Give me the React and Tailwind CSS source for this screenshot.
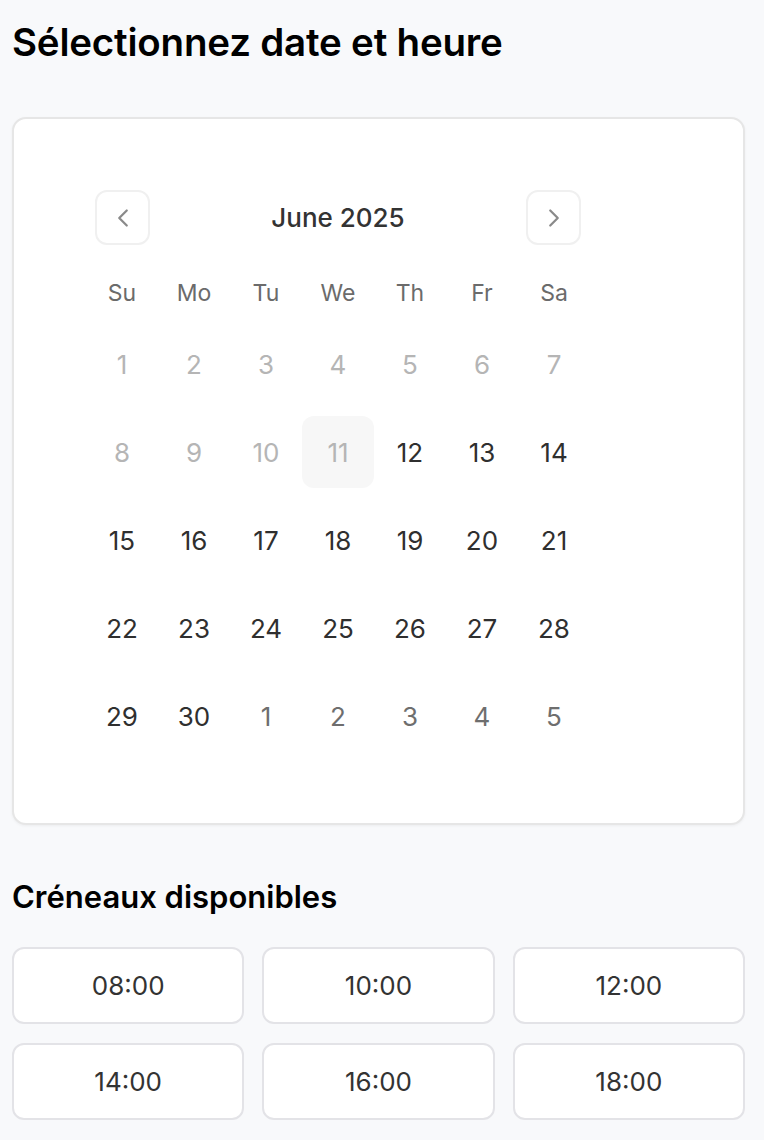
import React from "react";
import { ChevronLeft, ChevronRight } from "lucide-react";

const weekdays = ["Su", "Mo", "Tu", "We", "Th", "Fr", "Sa"];
const rows = [
  [1, 2, 3, 4, 5, 6, 7].map((d) => ({ d, t: "dis" })),
  [8, 9, 10].map((d) => ({ d, t: "dis" })).concat([{ d: 11, t: "today" }, { d: 12, t: "n" }, { d: 13, t: "n" }, { d: 14, t: "n" }]),
  [15, 16, 17, 18, 19, 20, 21].map((d) => ({ d, t: "n" })),
  [22, 23, 24, 25, 26, 27, 28].map((d) => ({ d, t: "n" })),
  [{ d: 29, t: "n" }, { d: 30, t: "n" }].concat([1, 2, 3, 4, 5].map((d) => ({ d, t: "out" }))),
];

const slots = ["08:00", "10:00", "12:00", "14:00", "16:00", "18:00"];

export default function App() {
  return (
    <div className="min-h-[1140px] bg-[#f8f9fb] pl-3 pr-[19px] pt-[18px]" style={{ fontFamily: "Inter, 'Noto Sans', sans-serif" }}>
      <h1 className="text-[38.5px] font-semibold leading-[48px] tracking-[-0.2px] text-black">Sélectionnez date et heure</h1>
      <div className="mt-[51px] h-[708px] rounded-[14px] border-2 border-[#e6e6e6] bg-white pl-[72px] pt-[71px] shadow-[0_1px_3px_rgba(0,0,0,0.05)]">
        <div className="w-[504px]">
          <div className="flex h-[55px] items-center justify-between px-[9px]">
            <button className="flex h-[55px] w-[55px] items-center justify-center rounded-[12px] border-2 border-[#f0f0f0] bg-white text-[#8a8a8a]">
              <ChevronLeft size={30} strokeWidth={1.8} />
            </button>
            <div className="text-[26px] font-medium text-[#333]">June 2025</div>
            <button className="flex h-[55px] w-[55px] items-center justify-center rounded-[12px] border-2 border-[#f0f0f0] bg-white text-[#8a8a8a]">
              <ChevronRight size={30} strokeWidth={1.8} />
            </button>
          </div>
          <div className="mt-[33px] grid grid-cols-7">
            {weekdays.map((w) => (
              <div key={w} className="flex h-[30px] items-center justify-center text-[23px] text-[#6b6b6b]">{w}</div>
            ))}
          </div>
          <div className="mt-[20px] flex flex-col gap-[16px]">
            {rows.map((r, i) => (
              <div key={i} className="grid grid-cols-7">
                {r.map((c, j) => (
                  <div
                    key={j}
                    className={
                      "flex h-[72px] items-center justify-center rounded-[12px] text-[26px] " +
                      (c.t === "dis" ? "text-[#b5b5b5]" : c.t === "today" ? "bg-[#f7f7f7] text-[#b5b5b5]" : c.t === "out" ? "text-[#6e6e6e]" : "text-[#2f2f2f]")
                    }
                  >
                    {c.d}
                  </div>
                ))}
              </div>
            ))}
          </div>
        </div>
      </div>
      <h2 className="mt-[52px] text-[31px] font-semibold leading-[40px] text-black">Créneaux disponibles</h2>
      <div className="mt-[30px] grid grid-cols-3 gap-x-[18px] gap-y-[19px]">
        {slots.map((s) => (
          <div key={s} className="flex h-[77px] items-center justify-center rounded-[12px] border-2 border-[#e3e3e7] bg-white text-[26px] text-[#333]">
            {s}
          </div>
        ))}
      </div>
    </div>
  );
}
